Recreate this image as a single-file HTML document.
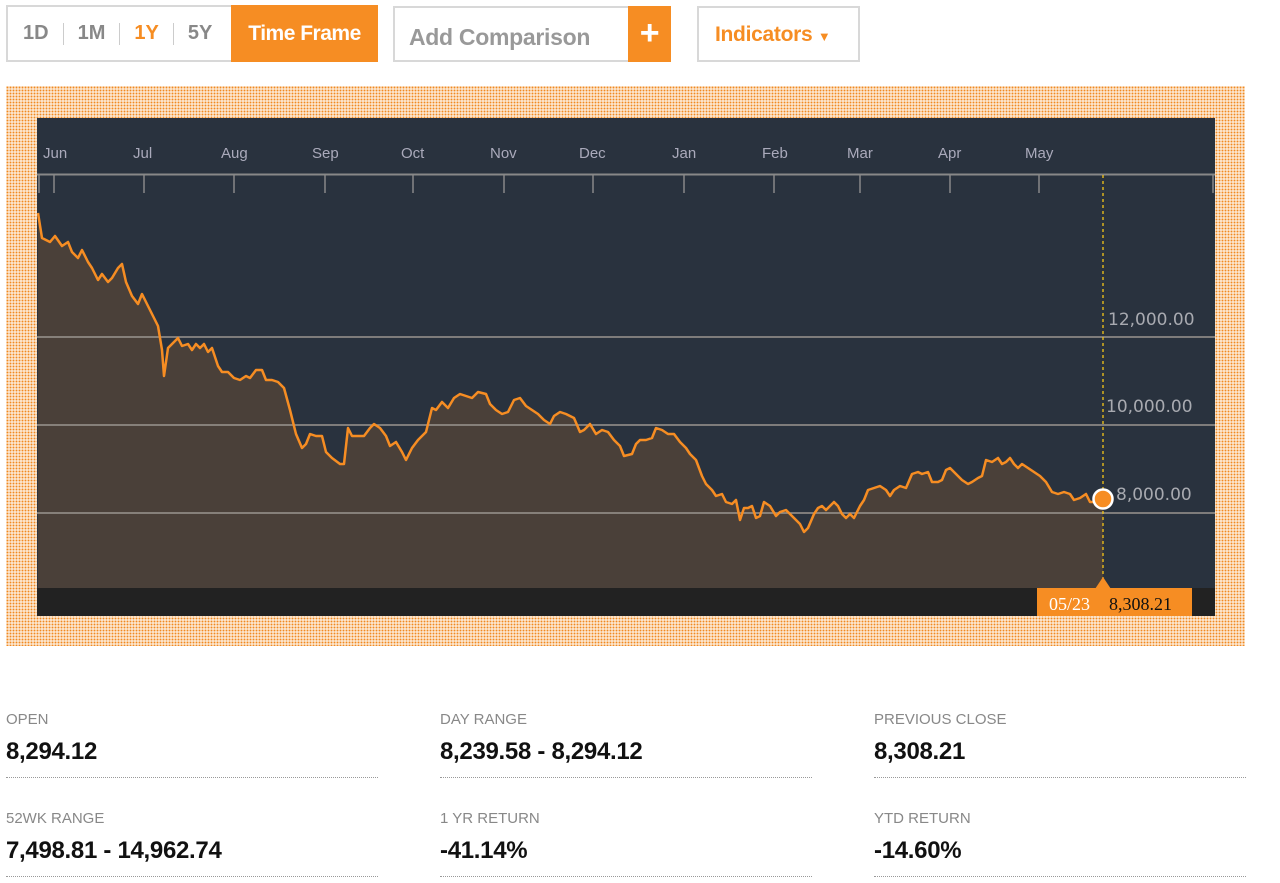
<!DOCTYPE html>
<html><head><meta charset="utf-8"><style>
*{margin:0;padding:0;box-sizing:border-box}
body{width:1280px;height:883px;background:#fff;font-family:"Liberation Sans",Arial,sans-serif;position:relative;overflow:hidden}
.abs{position:absolute}
.tf{left:6px;top:5px;width:372px;height:57px;border:2px solid #d8d8d8;display:flex;align-items:center;font-weight:bold;font-size:20px;color:#888}
.tf span{display:inline-block}
.sep{width:1px;height:22px;background:#ccc;margin:0 14px}
.tfb{position:absolute;right:-2px;top:-2px;width:147px;height:57px;background:#f68d23;color:#fff;font-size:21px;display:flex;align-items:center;justify-content:center;letter-spacing:-0.5px}
.cmp{left:393px;top:6px;width:278px;height:56px;border:2px solid #d8d8d8;font-weight:bold;font-size:23px;color:#999;padding:16px 0 0 14px;letter-spacing:-0.3px}
.plus{position:absolute;right:-2px;top:-2px;width:43px;height:56px;background:#f68d23;color:#fff;font-size:34px;text-align:center;line-height:54px}
.ind{left:697px;top:6px;width:163px;height:56px;border:2px solid #d8d8d8;font-weight:bold;font-size:21px;color:#f68d23;padding:15px 0 0 16px;letter-spacing:-0.3px}
.dots{left:6px;top:86px;width:1239px;height:560px;background-color:#fff;background-image:radial-gradient(#f08a20 1.1px,transparent 1.2px);background-size:3px 3px}
.lbl{font-size:15px;color:#888;text-transform:uppercase}
.val{font-size:24px;font-weight:bold;color:#111;margin-top:10px;letter-spacing:-0.3px}
.stat{position:absolute;width:372px;height:67px;border-bottom:1px dotted #999}
</style></head><body>
<div class="abs tf"><span style="margin-left:15px">1D</span><span class="sep"></span><span>1M</span><span class="sep"></span><span style="color:#f68d23">1Y</span><span class="sep"></span><span>5Y</span><div class="tfb">Time Frame</div></div>
<div class="abs cmp">Add Comparison<div class="plus">+</div></div>
<div class="abs ind">Indicators <span style="font-size:13px">▼</span></div>
<div class="abs dots"></div>
<svg class="abs" style="left:0;top:0" width="1280" height="700">
<rect x="37" y="118" width="1178" height="498" fill="#29323e"/>
<rect x="37" y="588" width="1178" height="28" fill="#222"/>
<g font-family="Liberation Sans" font-size="15" fill="#aab">
<text x="43" y="158">Jun</text><text x="133" y="158">Jul</text><text x="221" y="158">Aug</text><text x="312" y="158">Sep</text><text x="401" y="158">Oct</text><text x="490" y="158">Nov</text><text x="579" y="158">Dec</text><text x="672" y="158">Jan</text><text x="762" y="158">Feb</text><text x="847" y="158">Mar</text><text x="938" y="158">Apr</text><text x="1025" y="158">May</text></g>
<line x1="37" y1="174.5" x2="1215" y2="174.5" stroke="#888" stroke-width="2"/>
<g stroke="#888" stroke-width="1.5"><line x1="39" y1="174" x2="39" y2="193"/><line x1="54" y1="174" x2="54" y2="193"/><line x1="144" y1="174" x2="144" y2="193"/><line x1="234" y1="174" x2="234" y2="193"/><line x1="325" y1="174" x2="325" y2="193"/><line x1="413" y1="174" x2="413" y2="193"/><line x1="504" y1="174" x2="504" y2="193"/><line x1="593" y1="174" x2="593" y2="193"/><line x1="684" y1="174" x2="684" y2="193"/><line x1="774" y1="174" x2="774" y2="193"/><line x1="860" y1="174" x2="860" y2="193"/><line x1="950" y1="174" x2="950" y2="193"/><line x1="1039" y1="174" x2="1039" y2="193"/><line x1="1213" y1="174" x2="1213" y2="193"/></g>
<polygon fill="#4a4039" points="38,588 38,213 42,238 50,242 55,236 62,246 68,242 72,252 78,258 82,250 88,262 92,268 98,280 102,274 108,282 112,278 118,268 122,264 126,282 132,296 138,304 142,294 148,306 154,318 158,326 162,350 164,376 168,348 174,342 178,338 182,346 188,344 192,350 196,344 200,348 204,344 208,352 212,348 218,366 222,372 228,372 234,378 240,380 246,376 250,378 256,370 262,370 266,380 272,380 278,382 284,388 290,410 296,434 302,448 306,444 310,434 316,436 322,436 326,452 332,458 340,464 344,464 348,428 352,436 358,436 364,436 370,428 374,424 380,428 386,436 390,446 396,442 402,452 406,460 412,448 418,440 426,432 432,408 436,410 442,402 448,408 454,398 460,394 466,396 472,398 478,392 486,394 490,404 496,410 502,414 508,412 514,400 520,398 526,406 532,410 538,414 544,420 550,424 554,416 560,412 566,414 574,418 580,432 584,430 590,424 596,434 602,430 608,432 614,440 620,446 624,456 632,454 636,444 640,440 646,440 652,438 656,428 662,430 668,434 674,434 680,442 686,448 690,454 696,460 702,476 706,484 712,490 716,496 722,494 726,502 732,504 736,500 740,520 744,508 748,508 752,506 756,518 760,516 764,502 770,506 776,516 780,512 786,510 790,514 796,520 800,524 804,532 808,528 814,514 818,508 822,506 826,510 830,506 834,502 838,506 842,514 846,518 850,514 854,518 860,506 864,500 868,490 874,488 880,486 886,490 890,496 894,490 900,486 906,488 912,474 918,472 922,474 928,472 932,482 938,482 942,480 946,470 950,468 956,474 962,480 968,484 972,482 978,478 982,476 986,460 992,462 998,458 1002,464 1006,462 1010,458 1014,464 1018,468 1022,464 1028,468 1034,472 1040,476 1046,482 1052,492 1058,494 1064,492 1070,494 1074,500 1080,498 1086,494 1090,502 1096,502 1103,499 1103,588"/>
<g stroke="#9a958f" stroke-width="1.5"><line x1="37" y1="337" x2="1215" y2="337"/><line x1="37" y1="425" x2="1215" y2="425"/><line x1="37" y1="513" x2="1215" y2="513"/></g>
<g font-family="DejaVu Sans" font-size="17" fill="#a8aab0"><text x="1108" y="325">12,000.00</text><text x="1106" y="412">10,000.00</text><text x="1116" y="500">8,000.00</text></g>
<polyline fill="none" stroke="#f68d23" stroke-width="2.5" stroke-linejoin="round" points="38,213 42,238 50,242 55,236 62,246 68,242 72,252 78,258 82,250 88,262 92,268 98,280 102,274 108,282 112,278 118,268 122,264 126,282 132,296 138,304 142,294 148,306 154,318 158,326 162,350 164,376 168,348 174,342 178,338 182,346 188,344 192,350 196,344 200,348 204,344 208,352 212,348 218,366 222,372 228,372 234,378 240,380 246,376 250,378 256,370 262,370 266,380 272,380 278,382 284,388 290,410 296,434 302,448 306,444 310,434 316,436 322,436 326,452 332,458 340,464 344,464 348,428 352,436 358,436 364,436 370,428 374,424 380,428 386,436 390,446 396,442 402,452 406,460 412,448 418,440 426,432 432,408 436,410 442,402 448,408 454,398 460,394 466,396 472,398 478,392 486,394 490,404 496,410 502,414 508,412 514,400 520,398 526,406 532,410 538,414 544,420 550,424 554,416 560,412 566,414 574,418 580,432 584,430 590,424 596,434 602,430 608,432 614,440 620,446 624,456 632,454 636,444 640,440 646,440 652,438 656,428 662,430 668,434 674,434 680,442 686,448 690,454 696,460 702,476 706,484 712,490 716,496 722,494 726,502 732,504 736,500 740,520 744,508 748,508 752,506 756,518 760,516 764,502 770,506 776,516 780,512 786,510 790,514 796,520 800,524 804,532 808,528 814,514 818,508 822,506 826,510 830,506 834,502 838,506 842,514 846,518 850,514 854,518 860,506 864,500 868,490 874,488 880,486 886,490 890,496 894,490 900,486 906,488 912,474 918,472 922,474 928,472 932,482 938,482 942,480 946,470 950,468 956,474 962,480 968,484 972,482 978,478 982,476 986,460 992,462 998,458 1002,464 1006,462 1010,458 1014,464 1018,468 1022,464 1028,468 1034,472 1040,476 1046,482 1052,492 1058,494 1064,492 1070,494 1074,500 1080,498 1086,494 1090,502 1096,502 1103,499"/>
<line x1="1103" y1="175" x2="1103" y2="580" stroke="#f5c518" stroke-width="1.3" stroke-dasharray="3,3"/>
<circle cx="1103" cy="499" r="9.5" fill="#f68d23" stroke="#fff" stroke-width="2.5"/>
<rect x="1037" y="588" width="155" height="28" fill="#f68d23"/>
<polygon points="1095,589 1111,589 1103,577" fill="#f68d23"/>
<text x="1049" y="610" font-family="Liberation Serif" font-size="18" fill="#fff">05/23</text>
<text x="1109" y="610" font-family="Liberation Serif" font-size="18" fill="#111">8,308.21</text>
</svg>
<div class="stat" style="left:6px;top:711px"><div class="lbl">Open</div><div class="val">8,294.12</div></div>
<div class="stat" style="left:440px;top:711px"><div class="lbl">Day Range</div><div class="val">8,239.58 - 8,294.12</div></div>
<div class="stat" style="left:874px;top:711px"><div class="lbl">Previous Close</div><div class="val">8,308.21</div></div>
<div class="stat" style="left:6px;top:810px"><div class="lbl">52wk Range</div><div class="val">7,498.81 - 14,962.74</div></div>
<div class="stat" style="left:440px;top:810px"><div class="lbl">1 Yr Return</div><div class="val">-41.14%</div></div>
<div class="stat" style="left:874px;top:810px"><div class="lbl">YTD Return</div><div class="val">-14.60%</div></div>
</body></html>
